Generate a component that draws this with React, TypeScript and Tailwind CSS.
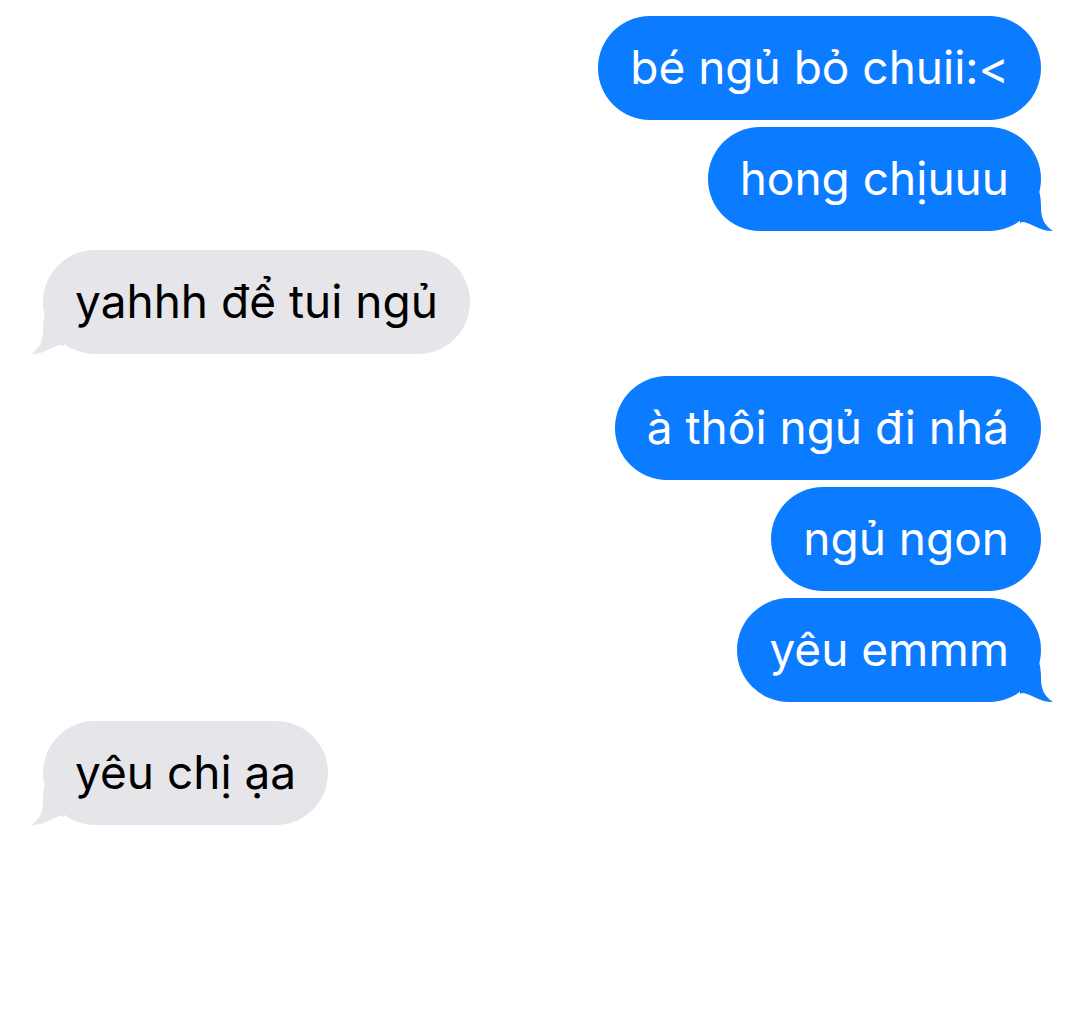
import React from "react";

const BLUE = "#0b7bff";

function RightTail() {
  return (
    <svg className="absolute right-[-13px] bottom-0" width="34" height="40" viewBox="0 0 34 40">
      <path d="M0,0 L19,0 C20.5,5 21,10 21,16 C21,27 24,34 33,40 C26,40 20,38 14,35 C10,33 5,31 2,31 L0,32 Z" fill={BLUE} />
    </svg>
  );
}

function LeftTail() {
  return (
    <svg className="absolute left-[-13px] bottom-0" width="34" height="40" viewBox="0 0 34 40">
      <path d="M34,0 L15,0 C13.5,5 13,10 13,16 C13,27 10,34 1,40 C8,40 14,38 20,35 C24,33 29,31 32,31 L34,32 Z" fill="#e5e5ea" />
    </svg>
  );
}

function Out({ text, tail, mt }: { text: string; tail?: boolean; mt: string }) {
  return (
    <div className={`flex justify-end ${mt}`}>
      <div className="relative h-[104px] rounded-[52px] bg-[#0b7bff] px-[32px] flex items-center text-white text-[46px] leading-none">
        {tail && <RightTail />}
        <span className="relative pb-[3px]">{text}</span>
      </div>
    </div>
  );
}

function In({ text, mt }: { text: string; mt: string }) {
  return (
    <div className={`flex justify-start ${mt}`}>
      <div className="relative h-[104px] rounded-[52px] bg-[#e5e5ea] px-[32px] flex items-center text-black text-[46px] leading-none">
        <LeftTail />
        <span className="relative pb-[3px]">{text}</span>
      </div>
    </div>
  );
}

export default function App() {
  return (
    <div className="w-[1080px] h-[1033px] bg-white pt-[16px] pl-[43px] pr-[39px]" style={{ fontFamily: "Inter, 'Noto Sans', sans-serif" }}>
      <Out text="bé ngủ bỏ chuii:<" mt="mt-0" />
      <Out text="hong chịuuu" tail mt="mt-[7px]" />
      <In text="yahhh để tui ngủ" mt="mt-[19px]" />
      <Out text="à thôi ngủ đi nhá" mt="mt-[22px]" />
      <Out text="ngủ ngon" mt="mt-[7px]" />
      <Out text="yêu emmm" tail mt="mt-[7px]" />
      <In text="yêu chị ạa" mt="mt-[19px]" />
    </div>
  );
}
